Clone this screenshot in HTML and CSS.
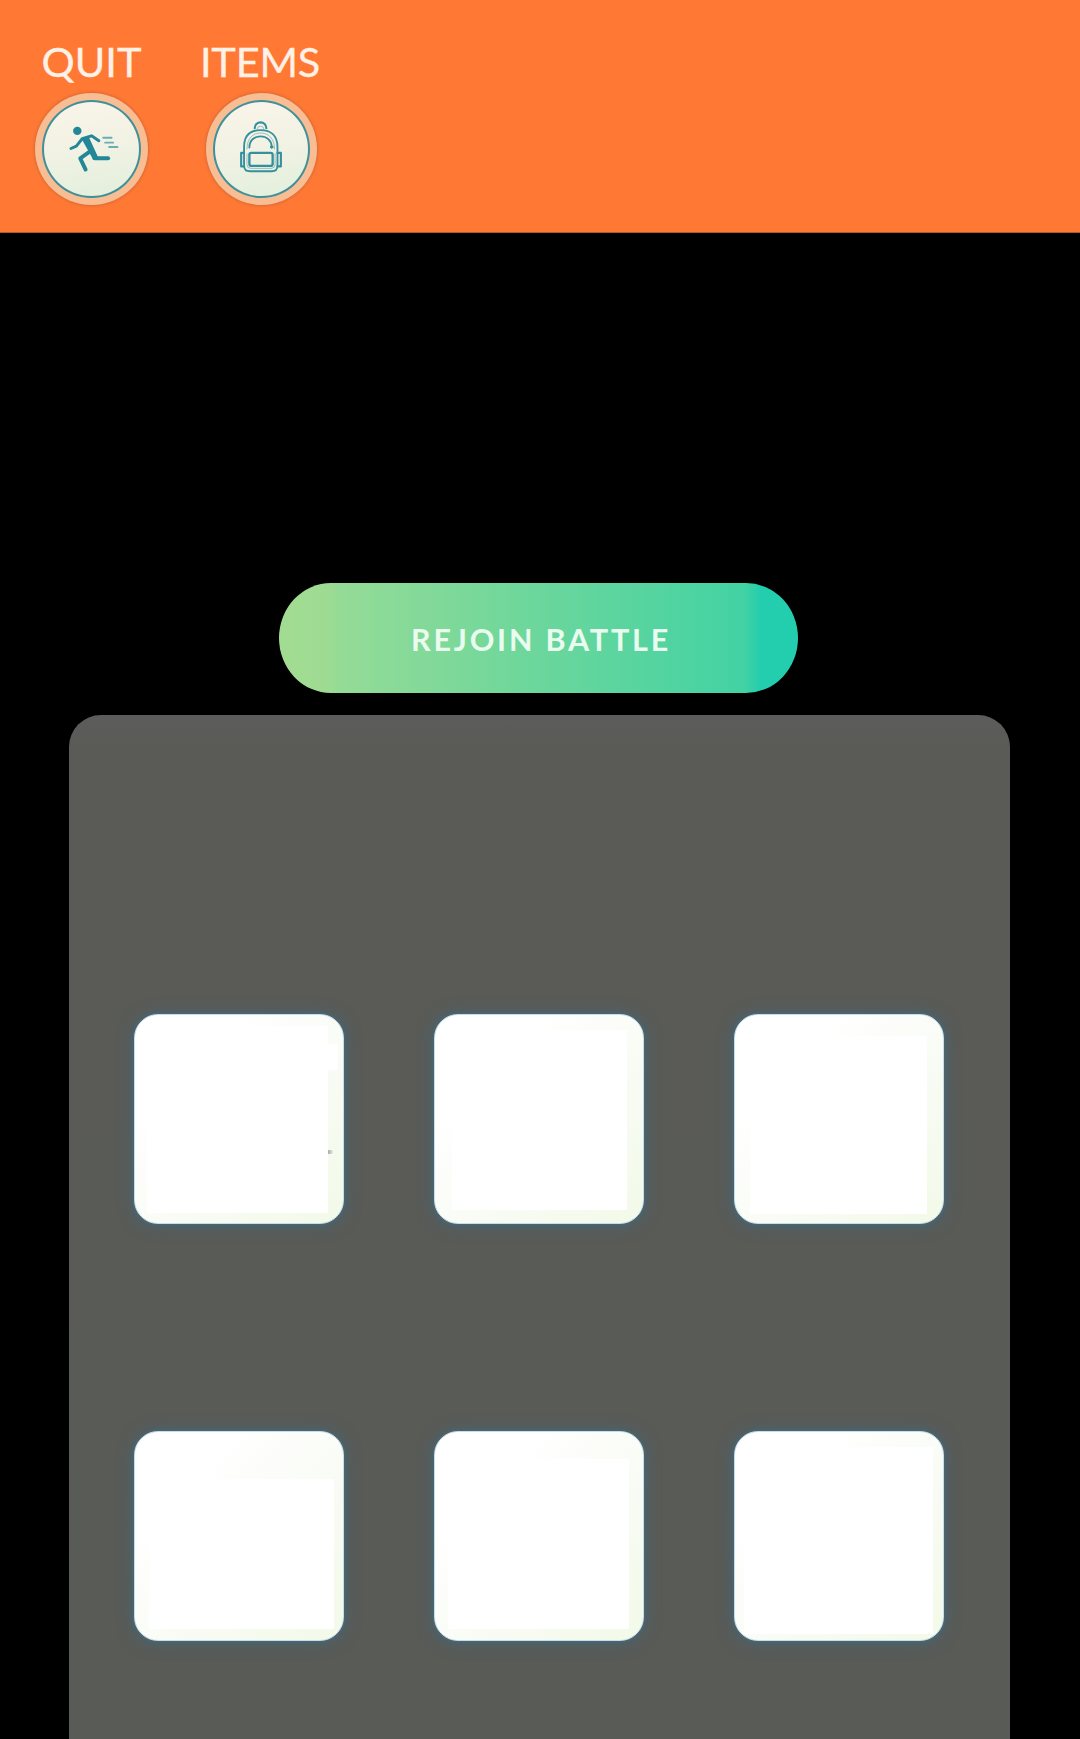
FILE: index.html
```html
<!DOCTYPE html>
<html lang="en">
<head>
<meta charset="utf-8">
<title>Battle Lobby</title>
<link rel="stylesheet" href="styles.css">
</head>
<body>
<header class="topbar">
  <div class="action">
    <span class="action-label">QUIT</span>
    <button class="round-button" aria-label="Quit">
      <svg class="icon" viewBox="0 0 96 96" fill="none" stroke="#238797" stroke-linecap="round" stroke-linejoin="round">
        <circle cx="33.500" cy="29.500" r="4.300" fill="#238797" stroke="none"/>
        <path d="M39 37.500L44.500 36.500L53.500 56L49.500 56.500Z" fill="#238797" stroke-width="2"/>
        <path d="M27 47.500L32.500 45L38.500 37.500L48 34.500L55.500 39.500" stroke-width="3"/>
        <path d="M46.500 50.500L36.500 57.500L42 69" stroke-width="4"/>
        <path d="M51 57.500H65" stroke-width="4"/>
        <path d="M60 36.500h8.500M62 41.500h8M66 46h8.500" stroke-width="2" opacity=".65"/>
      </svg>
    </button>
  </div>
  <div class="action action-items">
    <span class="action-label">ITEMS</span>
    <button class="round-button" aria-label="Items">
      <svg class="icon" viewBox="0 0 96 96" fill="none" stroke="#368f9d" stroke-width="1.9" stroke-linecap="round" stroke-linejoin="round">
        <path d="M41 26.500A6 6 0 0 1 53 26.500" stroke-width="2.200"/>
        <path d="M43.500 27.500A3.500 3 0 0 1 50.500 27.500" stroke-width="1" opacity=".5"/>
        <path d="M30 65V46C30 34 36.500 28.500 47 28.500S64.500 34 64.500 46V65Q64.500 71 58.500 71H36Q30 71 30 65Z"/>
        <path d="M33 48C33 37 39 31.500 47 31.500S61.500 37 61.500 48" stroke-width="1" opacity=".5"/>
        <path d="M35.500 46.500C35.500 39 40.500 35 47 35S58 39 58.500 45"/>
        <circle cx="58.500" cy="46" r="1.300" fill="#368f9d" stroke-width="1"/>
        <rect x="35.500" y="52" width="24" height="13.500" rx="2" stroke-width="2.400"/>
        <path d="M30 52H27V66H30M64.500 52H68V66H64.500" stroke-width="2.200"/>
        <path d="M33 53V64Q33 68 37 68H58Q62 68 62 64V53" stroke-width="1" opacity=".5"/>
      </svg>
    </button>
  </div>
</header>
<main class="lobby">
  <button class="rejoin">REJOIN BATTLE</button>
  <section class="team">
    <div class="slot slot-a"><div class="face"></div><div class="trim"><span class="tab"></span><span class="speck"></span></div></div>
    <div class="slot slot-b"><div class="face"></div></div>
    <div class="slot slot-c"><div class="face"></div></div>
    <div class="slot slot-d"><div class="face"></div></div>
    <div class="slot slot-e"><div class="face"></div></div>
    <div class="slot slot-f"><div class="face"></div></div>
  </section>
</main>
</body>
</html>
```
FILE: styles.css
```css
* { box-sizing: border-box; }

body {
  margin: 0;
  height: 1739px;
  overflow: hidden;
  display: flex;
  flex-direction: column;
  background: #000;
  font-family: Lato, sans-serif;
}

button {
  border: 0;
  padding: 0;
  font: inherit;
}

.topbar {
  height: 233px;
  flex: none;
  display: flex;
  gap: 45px;
  padding: 36px 29px 0;
  background: #ff7935;
  border-bottom: 1px solid #b85528;
}

.action {
  width: 125px;
  display: flex;
  flex-direction: column;
  align-items: center;
}

.action-label {
  height: 57px;
  line-height: 50px;
  font-size: 41.500px;
  color: #fff1e6;
  -webkit-text-stroke: .3px #fff1e6;
  white-space: nowrap;
}

.action-items .action-label {
  margin-left: -3px;
  letter-spacing: -.2px;
}

.round-button {
  width: 113px;
  height: 112px;
  padding: 7px;
  border-radius: 50%;
  background: #f8bd92;
  box-shadow: 0 0 3px 1px #d96a34;
}

.action-items .round-button {
  width: 111px;
}

.icon {
  display: block;
  width: 100%;
  height: 98px;
  border: 2px solid #40909a;
  border-radius: 50%;
  background: linear-gradient(170deg, #faf4e9, #f1f2e4 50%, #e2efdb);
}

.lobby {
  flex: 1;
  display: flex;
  flex-direction: column;
  align-items: center;
  padding-top: 350px;
}

.rejoin {
  width: 519px;
  height: 110px;
  flex: none;
  margin: 0 3px 22px 0;
  padding: 2px 0 0 5px;
  border-radius: 52px / 55px;
  background: linear-gradient(90deg, #a2dc92 0, #9edb92 50px, #95db96 58px, #6fd79b 240px, #43d2a4 465px, #22cead 482px);
  color: #e9fcef;
  font-size: 30.500px;
  font-weight: 700;
  letter-spacing: 2.800px;
}

.team {
  width: 941px;
  flex: 1;
  margin-right: 1px;
  padding: 299px 65px 0;
  display: grid;
  grid-template-columns: repeat(3, 210px);
  grid-auto-rows: 210px;
  column-gap: 90px;
  row-gap: 207px;
  border-radius: 32px 32px 0 0;
  background: linear-gradient(#5c5c5c 0, #5a5b57 30px, #595b57);
}

.slot {
  display: flex;
  border-radius: 24px;
  border: 1px solid #c5dfea;
  background: linear-gradient(135deg, #fff 25%, #f8fbf3 65%, #f2fae8);
  box-shadow: 0 0 3px 1px #48697a, 0 1px 14px 3px rgba(68, 101, 115, .7);
}

.face {
  flex: 1;
  background: #fff;
}

.slot-a { padding: 11px 0 10px 12px; }
.slot-b { padding: 15px 16px 13px 17px; }
.slot-c { padding: 21px 16px 9px 15px; }
.slot-d { padding: 47px 9px 11px 14px; }
.slot-e { padding: 27px 14px 11px 13px; }
.slot-f { padding: 15px 10px 6px 9px; }

.trim {
  width: 15px;
  display: flex;
  flex-direction: column;
  padding-top: 18px;
}

.tab {
  width: 10px;
  height: 26px;
  background: #fff;
}

.speck {
  width: 5px;
  height: 4px;
  margin-top: 80px;
  border-radius: 0 50% 50% 0;
  background: linear-gradient(90deg, #aaaeb5, #dce2e0);
}
```
